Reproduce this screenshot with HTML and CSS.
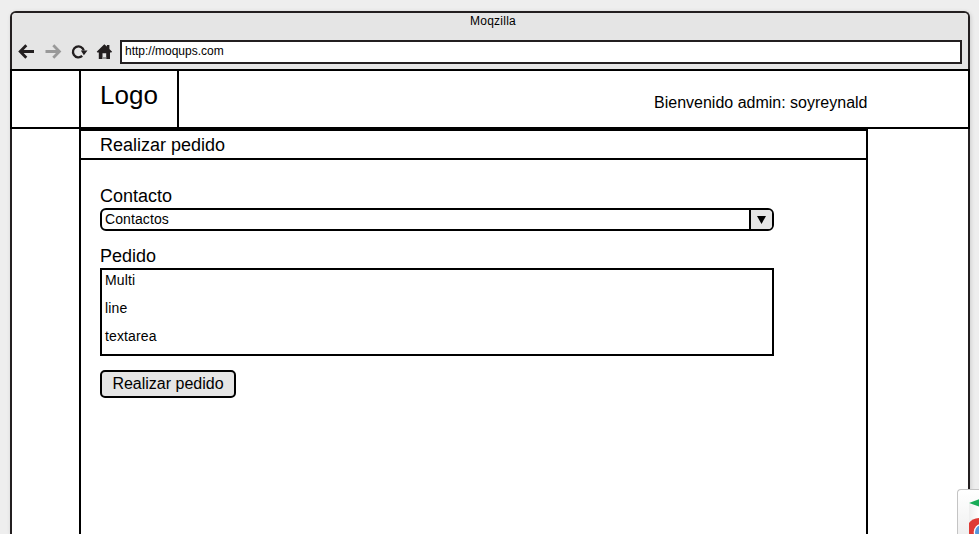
FILE: index.html
```html
<!DOCTYPE html>
<html lang="es">
<head>
<meta charset="utf-8">
<title>Realizar pedido</title>
<link rel="stylesheet" href="styles.css">
</head>
<body>
<div class="browser">
  <div class="chrome">
    <div class="window-title">Moqzilla</div>
    <div class="toolbar">
      <svg class="nav-icons" width="108" height="24" viewBox="0 0 108 24">
        <g fill="none" stroke="#231f20" stroke-width="2.8">
          <path d="M22 11.5H9M14.3 5.3L8.2 11.5L14.3 17.7"/>
          <path stroke="#999" d="M33.5 11.5H47M41.3 5.3L47.4 11.5L41.3 17.7"/>
          <path stroke-width="2.3" d="M70.2 15.9A5.5 5.5 0 1 1 71.8 10.500"/>
        </g>
        <path fill="#231f20" d="M68.8 10.500H75.5L71.9 15.2ZM84.7 11.8L92.3 4.2L94.9 6.6V4.9H97.4V9.1L100.1 11.8L99.3 12.4H98V19H94.2V13.2H90.5V19H86.8V12.4H85.5Z"/>
        <path fill="#999" d="M90.5 17H94.2V19H90.5Z"/>
      </svg>
      <div class="address">http://moqups.com</div>
    </div>
  </div>
  <header class="header">
    <div class="logo">Logo</div>
    <div class="welcome">Bienvenido admin: soyreynald</div>
  </header>
  <main class="panel">
    <h1 class="panel-title">Realizar pedido</h1>
    <form class="form">
      <label class="label">Contacto</label>
      <div class="select">
        <span class="select-value">Contactos</span>
        <span class="select-arrow"><svg width="9" height="8" viewBox="0 0 9 8"><path d="M0 0H9L4.5 8Z"/></svg></span>
      </div>
      <label class="label label-order">Pedido</label>
      <div class="textarea">Multi<br>line<br>textarea</div>
      <button class="submit" type="button">Realizar pedido</button>
    </form>
  </main>
</div>
<div class="badge">
  <svg width="21" height="44" viewBox="0 0 21 44">
    <defs><linearGradient id="shade" x2="1"><stop stop-color="#eee"/><stop offset="1" stop-color="#fff"/></linearGradient></defs>
    <path fill="url(#shade)" d="M11 14L21 17V44H11Z"/>
    <path fill="#19ac58" d="M11 13L21 9.2V16.5Z"/>
    <path fill="#df3a35" d="M11 44V33Q14 28.5 21 28V44Z"/>
    <circle cx="24" cy="42" r="8.3" fill="#fff"/>
    <circle cx="24" cy="42" r="7" fill="#5798dc"/>
  </svg>
</div>
</body>
</html>
```
FILE: styles.css
```css
* { box-sizing: border-box; }
body {
  margin: 0;
  padding: 11px 0 0 10px;
  height: 534px;
  overflow: hidden;
  background: #eee;
  color: #000;
  font-family: "Liberation Sans", Arial, sans-serif;
}
.browser {
  width: 960px;
  height: 523px;
  border: 2px solid #231f20;
  border-bottom: 0;
  border-radius: 6px 6px 0 0;
  background: #fff;
  box-shadow: 1px 1px 4px rgba(0, 0, 0, .15);
}
.chrome {
  height: 56px;
  border-radius: 4px 4px 0 0;
  background: #e5e5e5;
}
.window-title {
  height: 27px;
  padding-left: 6px;
  font-size: 12px;
  line-height: 16px;
  letter-spacing: .25px;
  text-align: center;
}
.toolbar { display: flex; }
.nav-icons { display: block; flex: none; }
.address {
  width: 842px;
  height: 24px;
  padding-left: 3px;
  border: 2px solid #231f20;
  background: #fff;
  font-size: 12px;
  line-height: 19px;
}
.header {
  display: flex;
  width: 960px;
  height: 60px;
  margin-left: -2px;
  border: 2px solid #000;
}
.logo {
  width: 100px;
  margin-left: 67px;
  padding-left: 19px;
  border: solid #000;
  border-width: 0 2px;
  font-size: 26px;
  line-height: 48px;
}
.welcome {
  flex: 1;
  padding: 23px 100.5px 0 0;
  font-size: 16px;
  line-height: 18px;
  text-align: right;
}
.panel {
  width: 789px;
  height: 405px;
  margin-left: 67px;
  border: 2px solid #000;
  border-bottom: 0;
}
.panel-title {
  height: 29px;
  margin: 0;
  padding-left: 19px;
  border-bottom: 2px solid #000;
  font-size: 18px;
  font-weight: normal;
  line-height: 29px;
}
.form { padding: 26px 0 0 19px; }
.label {
  display: block;
  height: 22px;
  font-size: 18px;
  line-height: 20px;
}
.select {
  display: flex;
  width: 674px;
  height: 23px;
  border: 2px solid #000;
  border-radius: 6px;
  overflow: hidden;
  font-size: 14px;
  line-height: 19px;
  letter-spacing: .1px;
}
.select-value { flex: 1; padding-left: 3px; }
.select-arrow {
  display: flex;
  align-items: center;
  justify-content: center;
  width: 23px;
  border-left: 2px solid #000;
  background: #e5e5e5;
}
.label-order { margin-top: 15px; }
.textarea {
  width: 674px;
  height: 88px;
  padding-left: 3px;
  border: 2px solid #000;
  font-size: 14px;
  line-height: 28px;
  letter-spacing: .13px;
}
.textarea::before { content: ""; display: block; margin-top: -4px; }
.submit {
  display: block;
  width: 136px;
  height: 28px;
  margin-top: 14px;
  padding: 0;
  border: 2px solid #000;
  border-radius: 5px;
  background: #e5e5e5;
  color: #000;
  font: 16px/22px "Liberation Sans", Arial, sans-serif;
}
.badge {
  position: absolute;
  right: 0;
  bottom: 0;
  width: 22px;
  height: 45px;
  border: solid #c4c4c4;
  border-width: 1px 0 0 1px;
  border-radius: 4px 0 0 0;
  background: linear-gradient(#fff, #f0f0f0);
  overflow: hidden;
}
.badge svg { display: block; }
```
